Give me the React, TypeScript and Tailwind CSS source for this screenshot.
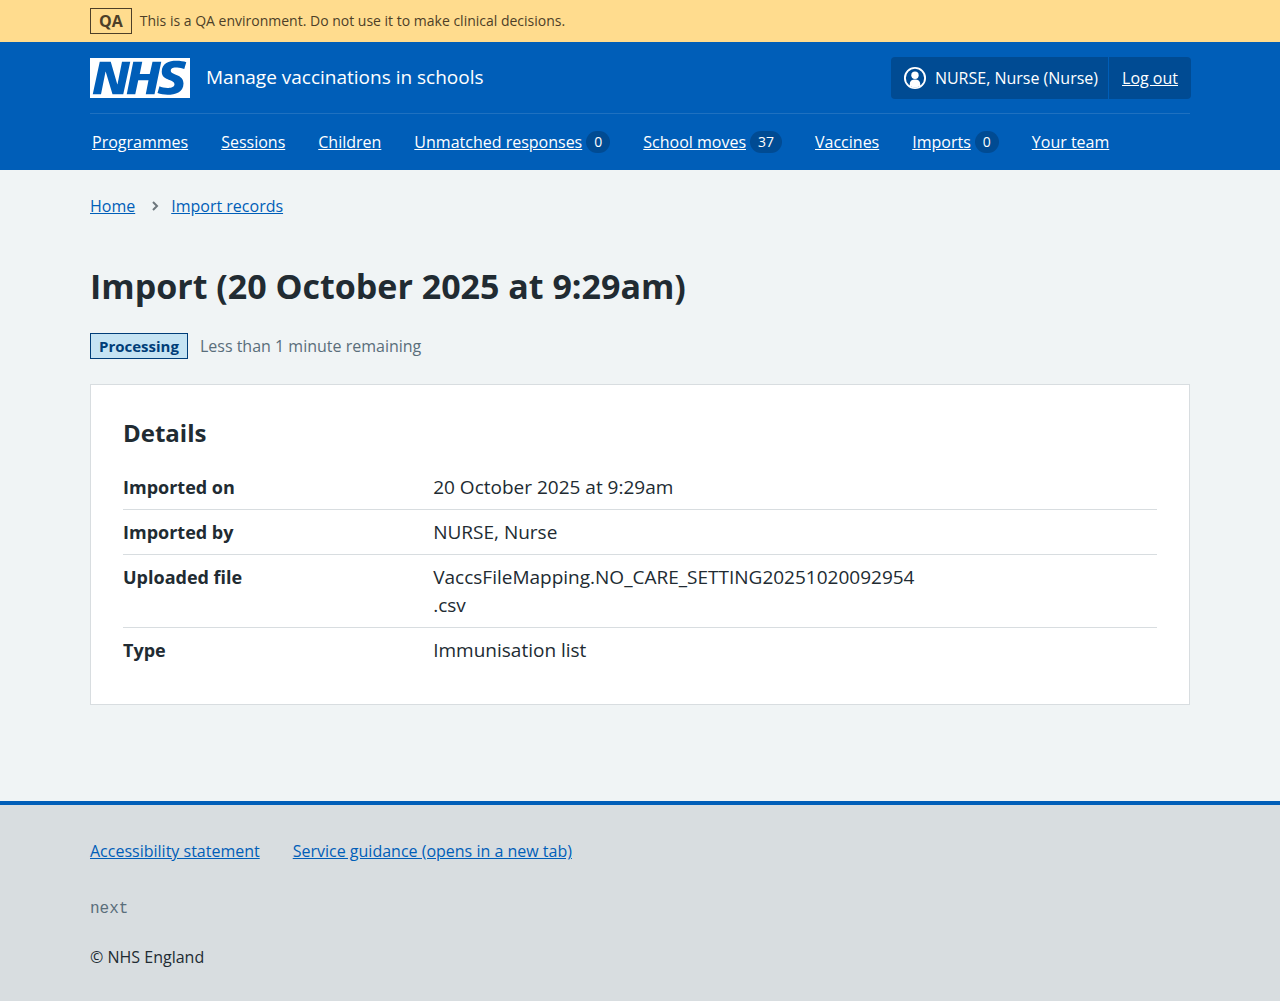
import React from "react";

const navItems: { label: string; count?: number }[] = [
  { label: "Programmes" },
  { label: "Sessions" },
  { label: "Children" },
  { label: "Unmatched responses", count: 0 },
  { label: "School moves", count: 37 },
  { label: "Vaccines" },
  { label: "Imports", count: 0 },
  { label: "Your team" },
];

const details: { term: string; value: React.ReactNode }[] = [
  { term: "Imported on", value: "20 October 2025 at 9:29am" },
  { term: "Imported by", value: "NURSE, Nurse" },
  {
    term: "Uploaded file",
    value: (
      <>
        VaccsFileMapping.NO_CARE_SETTING20251020092954
        <wbr />
        .csv
      </>
    ),
  },
  { term: "Type", value: "Immunisation list" },
];

function Container({ children, className = "" }: { children: React.ReactNode; className?: string }) {
  return <div className={`mx-auto w-full max-w-[1164px] px-8 ${className}`}>{children}</div>;
}

function NhsLogo() {
  return (
    <svg className="h-10 w-[100px]" viewBox="0 0 200 80" role="img" aria-label="NHS">
      <path
        fill="#fff"
        d="M200 0v80H0V0h200Zm-27.5 5.5c-14.5 0-29 5-29 22 0 10.2 7.7 13.5 14.7 16.3l.7.3c5.4 2 10.1 3.9 10.1 8.4 0 6.5-8.5 7.5-14 7.5s-12.5-1.5-16-3.5L135 70c5.5 2 13.5 3.5 20 3.5 15.5 0 32-4.5 32-22.5 0-19.5-25.5-16.5-25.5-25.5 0-5.5 5.5-6.5 12.5-6.5a35 35 0 0 1 14.5 3l4-13.5c-4.5-2-12-3-20-3Zm-131 2h-22l-14 65H22l9-45h.5l13.5 45h21.5l14-65H64l-9 45h-.5l-13-45Zm63 0h-18l-13 65h17l6-28H117l-5.5 28H129l13.5-65H125L119.5 32h-20l5-24.5Z"
      />
    </svg>
  );
}

function UserIcon() {
  return (
    <svg className="size-6 shrink-0" viewBox="0 0 24 24" aria-hidden="true">
      <circle cx="12" cy="12" r="10.1" fill="none" stroke="#fff" strokeWidth="1.9" />
      <circle cx="12" cy="9.2" r="3.7" fill="#fff" />
      <path fill="#fff" d="M12 13.6c3 0 5.2 1.5 5.2 4.2v2.3A10 10 0 0 1 12 21.6a10 10 0 0 1-5.2-1.5v-2.3c0-2.7 2.2-4.2 5.2-4.2Z" />
    </svg>
  );
}

export default function App() {
  return (
    <div className="flex min-h-screen flex-col bg-[#f0f4f5] font-['Open_Sans',sans-serif] text-base leading-6 text-[#212b32]">
      <div className="bg-[#ffdc8e] py-2 text-[#4d3f28]">
        <Container className="flex items-center gap-2">
          <strong className="border border-[#4d3f28] px-2 font-bold">QA</strong>
          <span className="text-sm font-medium">This is a QA environment. Do not use it to make clinical decisions.</span>
        </Container>
      </div>

      <header className="bg-[#005eb8] text-white">
        <Container>
          <div className="flex flex-wrap items-center justify-between border-b border-[#1f71c0] pt-[15px] pb-[14px]">
            <a href="#" className="flex items-center gap-4">
              <NhsLogo />
              <span className="pb-0.5 text-[19px] leading-7">Manage vaccinations in schools</span>
            </a>
            <div className="-mr-px flex rounded bg-[#004b93]">
              <span className="flex items-center gap-2 border-r border-[#005eb8] py-[9px] pr-2.5 pl-3">
                <UserIcon />
                NURSE, Nurse (Nurse)
              </span>
              <a href="#" className="px-[13px] py-[9px] underline">Log out</a>
            </div>
          </div>
          <nav aria-label="Menu">
            <ul className="flex flex-wrap gap-x-[33px] px-0.5">
              {navItems.map((item) => (
                <li key={item.label}>
                  <a href="#" className="flex items-center gap-1 py-4">
                    <span className="underline">{item.label}</span>
                    {item.count !== undefined && (
                      <span className="rounded-full bg-[#004b93] px-2 text-sm leading-[22px] font-medium">{item.count}</span>
                    )}
                  </a>
                </li>
              ))}
            </ul>
          </nav>
        </Container>
      </header>

      <Container className="grow pt-6 pb-24">
        <nav aria-label="Breadcrumb">
          <ol className="flex items-center text-[#005eb8]">
            <li><a href="#" className="underline">Home</a></li>
            <li className="flex items-center">
              <svg className="mr-3 ml-4 h-2.5 w-2" viewBox="0 0 8 10" fill="none" stroke="#6d767c" strokeWidth="2" aria-hidden="true">
                <path d="M2 1l4 4-4 4" />
              </svg>
              <a href="#" className="underline">Import records</a>
            </li>
          </ol>
        </nav>

        <main>
          <h1 className="mt-12 text-[34px] leading-10 font-bold">Import (20 October 2025 at 9:29am)</h1>
          <div className="mt-[27px] flex items-center gap-3">
            <strong className="border border-[#003d78] bg-[#c5e3f3] px-2 text-[15px] leading-6 font-bold text-[#003d78]">Processing</strong>
            <span className="text-[#5a6e7b]">Less than 1 minute remaining</span>
          </div>

          <section className="mt-[25px] border border-[#d8dde0] bg-white p-8">
            <h2 className="text-2xl leading-8 font-bold">Details</h2>
            <dl className="mt-4 text-[19px] leading-7">
              {details.map((row) => (
                <div key={row.term} className="flex border-b border-[#d8dde0] py-2 last:border-b-0">
                  <dt className="w-[30%] pr-4 text-lg leading-7 font-bold">{row.term}</dt>
                  <dd className="w-1/2 pr-4 wrap-break-word">{row.value}</dd>
                </div>
              ))}
            </dl>
          </section>
        </main>
      </Container>

      <footer className="border-t-4 border-[#005eb8] bg-[#d8dde0] pt-[34px] pb-8">
        <Container>
          <ul className="flex flex-wrap gap-x-[33px] text-[#005eb8]">
            <li><a href="#" className="underline">Accessibility statement</a></li>
            <li><a href="#" className="underline">Service guidance (opens in a new tab)</a></li>
          </ul>
          <p className="mt-[34px] font-['Liberation_Mono',monospace] text-base leading-6 text-[#5a6e7b]">next</p>
          <p className="mt-6">© NHS England</p>
        </Container>
      </footer>
    </div>
  );
}
